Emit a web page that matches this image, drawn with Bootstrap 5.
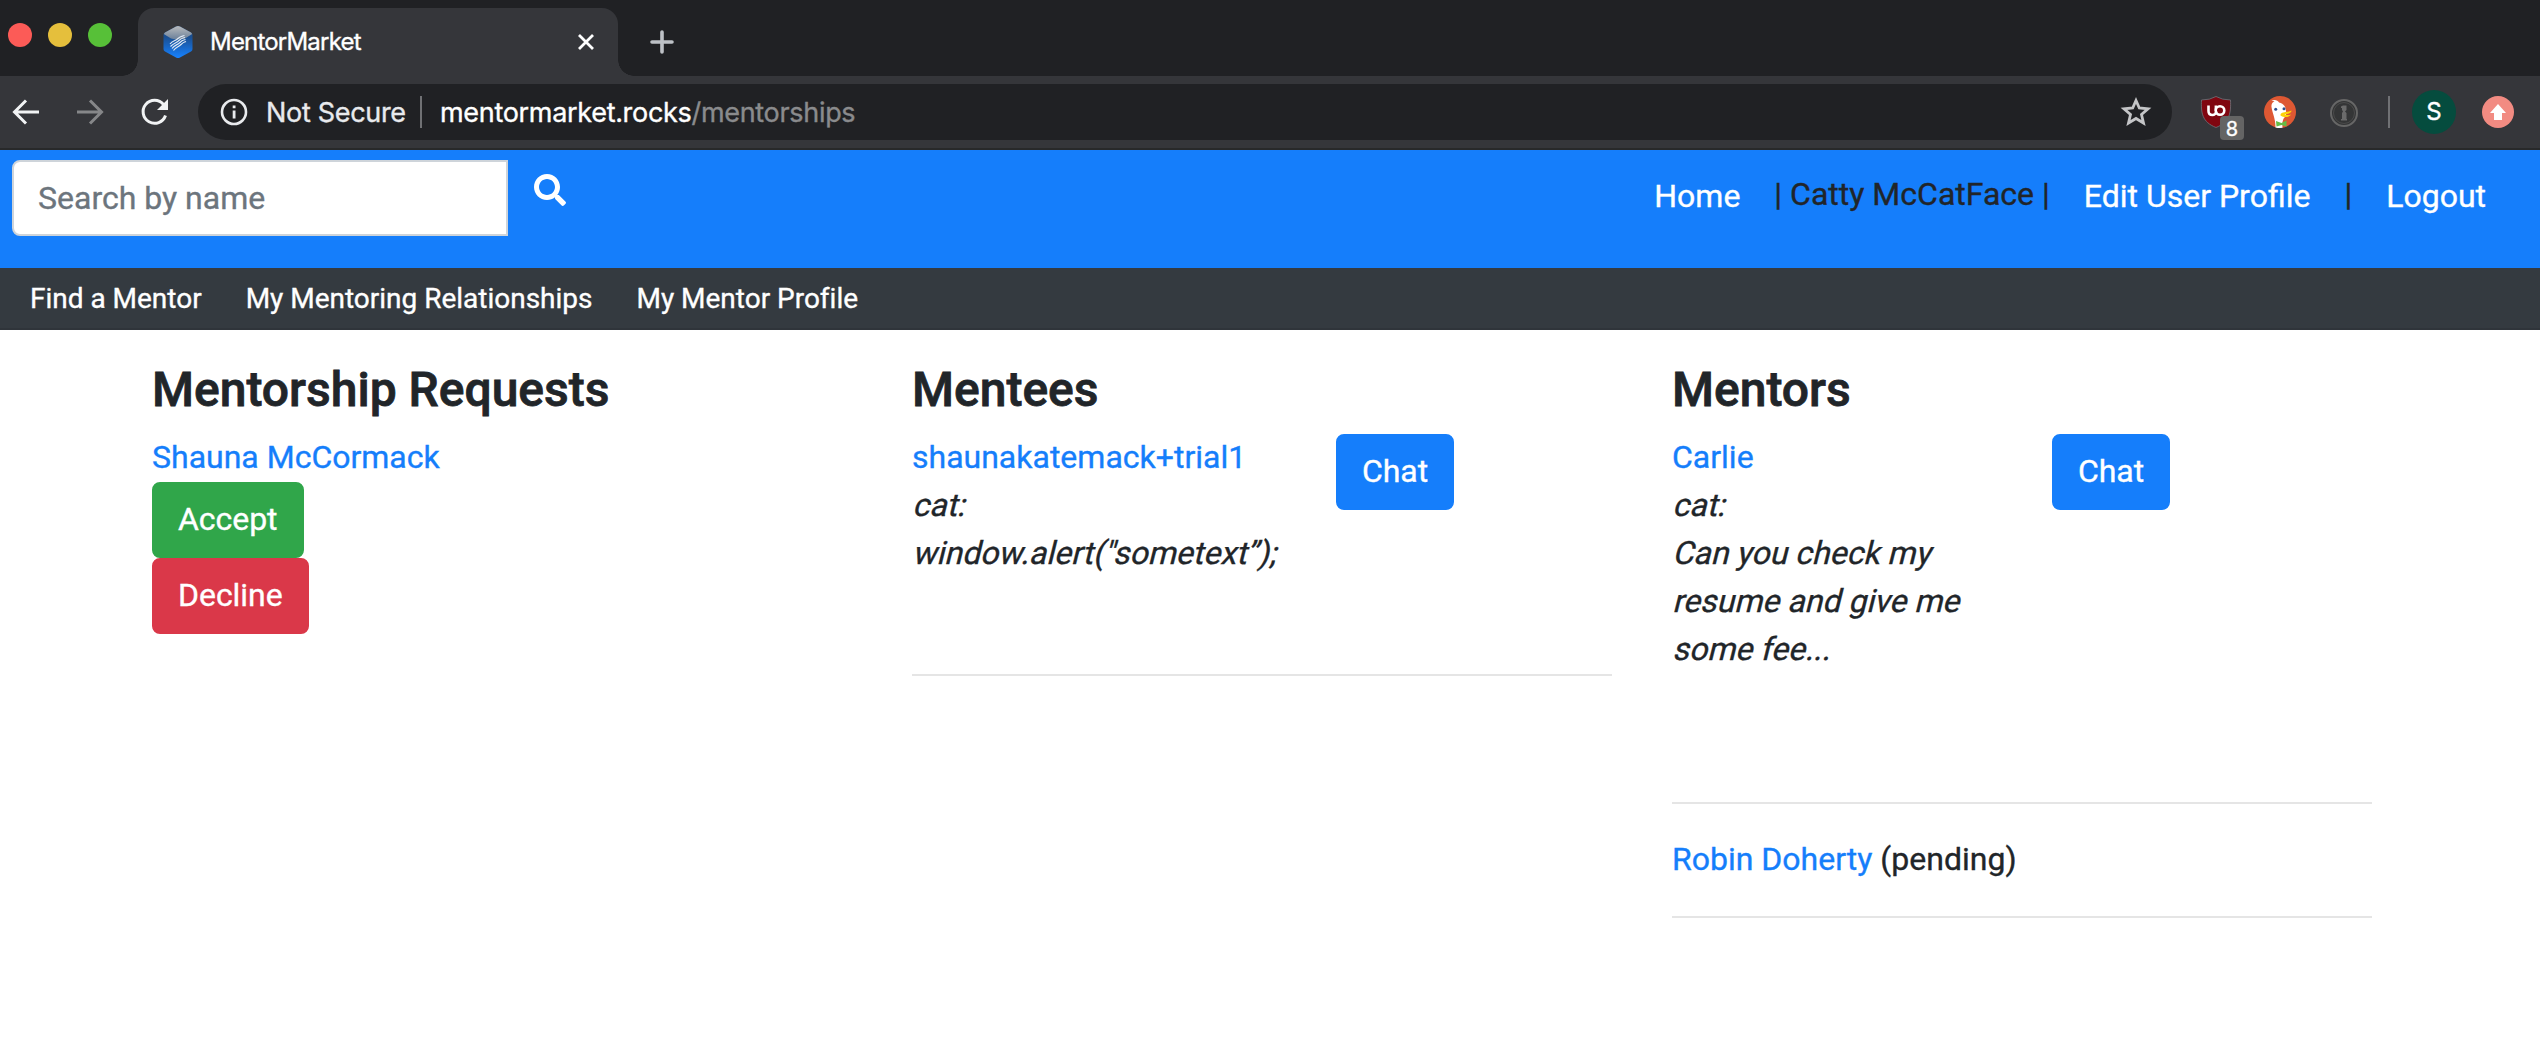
<!DOCTYPE html>
<html lang="en">
<head>
<meta charset="utf-8">
<title>MentorMarket</title>
<link href="https://cdn.jsdelivr.net/npm/bootstrap@5.3.0/dist/css/bootstrap.min.css" rel="stylesheet">
<style>
:root{font-size:32px}
body{font-family:Roboto,sans-serif;font-size:32px;line-height:1.5;color:#212529;background:#fff;overflow:hidden;-webkit-text-stroke:.35px}
a{color:#157efb;text-decoration:none}
svg{display:block;flex:none}
.chrome-ui{font-family:Inter,sans-serif;line-height:1}
.tabstrip{height:76px;background:#202124}
.lights{width:122px;height:70px;padding-left:8px;gap:16px}
.light{width:24px;height:24px;border-radius:50%}
.light-close{background:#fc5b57}
.light-min{background:#e5bf3c}
.light-max{background:#57c038}
.tab-foot{width:16px;height:16px}
.foot-l{background:radial-gradient(circle at 0 0,#202124 15.5px,#35363a 16px)}
.foot-r{background:radial-gradient(circle at 100% 0,#202124 15.5px,#35363a 16px)}
.active-tab{width:480px;height:68px;border-radius:16px 16px 0 0;background:#35363a;padding:0 24px 0 25px;color:#fff;font-size:24px}
.tab-title{margin-left:17px;letter-spacing:-.8px}
.new-tab{margin:30px 0 0 16px}
.toolbar{height:74px;background:#35363a;border-bottom:2px solid #28292a;padding-left:10px}
.nav-icons{gap:32px}
.omnibox{flex:none;width:1974px;height:56px;border-radius:28px;background:#202124;margin-left:28px;padding:0 20px 0 22px;font-size:27px;letter-spacing:-.31px;color:#e8eaed}
.not-secure{margin-left:18px;width:154px}
.address{margin-left:18px}
.addr-path{color:#8a8b8d}
.tool-sep{width:2px;height:32px;background:#707174}
.ext-sep{margin-left:30px}
.ubo{width:46px;height:44px;margin:12px 0 0 27px}
.ubo-count{left:21px;top:20px;width:24px;height:24px;border-radius:4px;background:#646464;color:#fff;font-size:20px;line-height:26px}
.duck{margin-left:19px}
.keyhole{margin:2px 0 0 34px}
.avatar{width:44px;height:44px;border-radius:50%;background:#054c3e;color:#fff;font-size:24px;margin-left:22px}
.update-dot{margin-left:26px}
.topbar{height:118px;background:#157efb;padding:10px 54px 0 12px}
.search-box{width:496px;height:76px;border:2px solid #ced4da;border-radius:8px 0 0 8px;padding:12px 24px;font-size:32px}
.search-box::placeholder{color:#6c757d;opacity:1}
.search-icon{margin:14px 0 0 26px}
.top-links{line-height:48px;padding-top:10px}
.top-links a{color:#fff;padding-top:2px}
.mx-name{margin:0 34px}
.mx-bar{margin:0 34px}
.subbar{height:62px;background:#343a40;border-bottom:2px solid #2f343a;padding:1px 0 0 30px;gap:44px;font-size:28px;letter-spacing:-.01px}
.subbar a{color:#fff}
.board{width:2280px;margin-left:122px;padding-top:31px}
.board .col-4{padding:0 30px}
.board h4{font-size:48px;font-weight:500;line-height:58px;margin:0 0 14px;-webkit-text-stroke:.8px}
.board .btn{margin-top:1px;padding:11px 24px 13px}
.board .btn + .btn{margin-top:0}
.btn{--bs-btn-font-size:32px;--bs-btn-border-width:2px;--bs-btn-border-radius:8px;height:76px;line-height:48px;color:#fff;letter-spacing:-.04px}
.btn-primary{--bs-btn-bg:#157efb;--bs-btn-border-color:#157efb}
.btn-success{--bs-btn-bg:#30a64a;--bs-btn-border-color:#30a64a}
.btn-danger{--bs-btn-bg:#da3849;--bs-btn-border-color:#da3849}
.rule{height:2px;background:#e5e5e5}
.mentee-row{height:241px}
.mentor-row{height:369px}
.mentor-text{width:380px}
.mentee-text{width:424px}
.pending-row{height:112px;padding-top:31px}
/* Obliqued regular face, slanted line by line round its baseline */
.slant{display:block;transform:skewX(-14deg);transform-origin:0 75%;white-space:nowrap}
</style>
</head>
<body>
<header class="chrome-ui">
  <div class="tabstrip d-flex align-items-end">
    <div class="lights d-flex align-items-center align-self-start">
      <span class="light light-close"></span><span class="light light-min"></span><span class="light light-max"></span>
    </div>
    <span class="tab-foot foot-l"></span>
    <div class="active-tab d-flex align-items-center">
      <svg width="30" height="32" viewBox="0 0 30 32"><defs><linearGradient id="fav" x1="0" y1="0" x2="0" y2="1"><stop offset="0" stop-color="#174f91"/><stop offset=".35" stop-color="#1a4f92"/><stop offset="1" stop-color="#1682ff"/></linearGradient><linearGradient id="favtop" x1="0" y1="0" x2="0" y2="1"><stop offset="0" stop-color="#b9bbbd"/><stop offset="1" stop-color="#6a7f99"/></linearGradient></defs><path d="M13 .6Q15-.5 17 .6L28 6.500Q29.500 7.500 29.500 9V23Q29.500 24.500 28 25.500L17 31.400Q15 32.500 13 31.400L2 25.500Q.5 24.500.5 23V9Q.5 7.500 2 6.500Z" fill="url(#fav)"/><path d="M13 .6Q15-.5 17 .6L28 6.500 29.200 8 22 12.500Q15 14.500 8 12.500L.8 8 2 6.500Z" fill="url(#favtop)"/><g fill="none" stroke="#e2ebf5" stroke-width="1.200"><path d="M7 18C10 14 12 15.500 15 12.500S19 10.500 21.500 9.500M7.500 20.500C11 16.500 13 17.500 16 14.500S19.500 12.500 22 11.500M9 22.500C12 18.500 14 19.500 17 16.500S20 14.500 22.500 13.500M10.500 24.500C13 21 15 21.500 18 18.500S21 16.500 23 15.500"/></g></svg>
      <span class="tab-title">MentorMarket</span>
      <svg class="ms-auto" width="16" height="16" viewBox="0 0 16 16"><path d="m1 1 14 14M15 1 1 15" stroke="#fff" stroke-width="2.800"/></svg>
    </div>
    <span class="tab-foot foot-r"></span>
    <svg class="new-tab align-self-start" width="24" height="24" viewBox="0 0 24 24"><path d="M12 2v20M2 12h20" stroke="#bdc1c6" stroke-width="3.600" stroke-linecap="round"/></svg>
  </div>
  <div class="toolbar d-flex align-items-center">
    <div class="nav-icons d-flex">
      <svg width="32" height="32" viewBox="0 0 32 32" fill="none" stroke="#f1f3f4" stroke-width="3"><path d="M29 16H5M16 4.500 4.500 16 16 27.500"/></svg>
      <svg width="32" height="32" viewBox="0 0 32 32" fill="none" stroke="#868789" stroke-width="3"><path d="M3 16h24M16 4.500 27.500 16 16 27.500"/></svg>
      <svg width="32" height="32" viewBox="-1 0 32 32"><path d="M24.500 8.500A11.500 11.500 0 1 0 26.500 19.500" fill="none" stroke="#f1f3f4" stroke-width="3"/><path d="M29 3v11H18Z" fill="#f1f3f4"/></svg>
    </div>
    <div class="omnibox d-flex align-items-center">
      <svg width="28" height="28" viewBox="0 0 28 28"><circle cx="14" cy="14" r="12" fill="none" stroke="#e8eaed" stroke-width="2.600"/><path d="M12.700 12.500h2.800v8h-2.800zM12.700 7.500h2.800v2.800h-2.800z" fill="#e8eaed"/></svg>
      <span class="not-secure">Not Secure</span>
      <span class="tool-sep"></span>
      <span class="address"><span class="text-white">mentormarket.rocks</span><span class="addr-path">/mentorships</span></span>
      <svg class="ms-auto" width="32" height="32" viewBox="0 0 32 32"><path d="M16 4.500 19.300 12 28 12.800 21.500 18.500 23.500 27 16 22.500 8.500 27 10.500 18.500 4 12.800 12.700 12Z" fill="none" stroke="#c4c5c7" stroke-width="2.800"/></svg>
    </div>
    <div class="ubo position-relative">
      <svg width="34" height="32" viewBox="0 0 34 32"><path d="M17 .5Q23 4 31.500 4C32 17 31 26 17 31.500 3 26 2 17 2.500 4Q11 4 17 .5Z" fill="#800610" stroke="#70747a" stroke-width=".8"/><path d="M9.500 9.500v5.500q0 4 4 4 3 0 4-3.500" fill="none" stroke="#fff" stroke-width="2.600"/><path d="M16.800 9.500v5" stroke="#fff" stroke-width="2.400"/><circle cx="21" cy="14.500" r="4.300" fill="none" stroke="#fff" stroke-width="2.600"/></svg>
      <span class="ubo-count position-absolute text-center">8</span>
    </div>
    <svg class="duck" width="32" height="32" viewBox="0 0 32 32"><circle cx="16" cy="16" r="16" fill="#de5833"/><path d="M11.500 31.400C11.500 22 8.500 18 7.500 11 7 7.500 9 6 10.500 5.500L7.500 4.500C11 3 14 4.500 15 6.500 20 7.500 22 11 22 16V20C20 22 18 23 18.500 31.800Q15 32.200 11.500 31.400Z" fill="#fff"/><path d="M16.500 18.500C17.500 16 23 16.500 27.500 14.500 27.500 17 24 18 20.500 18.500 23 19.500 25 19 27 18.500 25.500 21.500 20 22 16.500 19.500Z" fill="#fdd209"/><path d="m12 25 5.500 2 5-2.500v6l-5-1.500-5 1.500Z" fill="#65bc46"/><circle cx="11.700" cy="13.300" r="1.500" fill="#2d4f8e"/><circle cx="20" cy="12.800" r="1.500" fill="#2d4f8e"/></svg>
    <svg class="keyhole" width="28" height="28" viewBox="0 0 28 28"><circle cx="14" cy="14" r="13" fill="#343536" stroke="#666" stroke-width="2"/><circle cx="14" cy="14" r="10.500" fill="none" stroke="#4b4b4b" stroke-width="1"/><path d="M11 7.500 13 6.500H16.500V11L15 12.500 16.500 14V20H17V21.500H11V20H12V14L13 12.500 12 11V9H11Z" fill="#6b6b6b"/></svg>
    <span class="tool-sep ext-sep"></span>
    <span class="avatar d-flex align-items-center justify-content-center">S</span>
    <svg class="update-dot" width="32" height="32" viewBox="0 0 32 32"><circle cx="16" cy="16" r="16" fill="#f28b82"/><path d="M16 8 24 17H20V24H12V17H8Z" fill="#fff"/></svg>
  </div>
</header>

<nav class="topbar d-flex align-items-start">
  <input class="search-box bg-white" type="text" placeholder="Search by name">
  <svg class="search-icon" width="32" height="32" viewBox="0 0 512 512" fill="#fff"><path d="M505 442.700 405.300 343c-4.500-4.500-10.600-7-17-7H372c27.600-35.300 44-79.700 44-128C416 93.100 322.900 0 208 0S0 93.100 0 208s93.100 208 208 208c48.300 0 92.700-16.400 128-44v16.300c0 6.400 2.500 12.500 7 17l99.700 99.700c9.400 9.400 24.600 9.400 33.900 0l28.300-28.300c9.400-9.400 9.400-24.600.1-34zM208 336c-70.700 0-128-57.200-128-128 0-70.700 57.200-128 128-128 70.700 0 128 57.200 128 128 0 70.700-57.200 128-128 128z"/></svg>
  <div class="top-links d-flex ms-auto">
    <a href="#">Home</a>
    <span class="mx-name">| Catty McCatFace |</span>
    <a href="#">Edit User Profile</a>
    <span class="mx-bar">|</span>
    <a href="#">Logout</a>
  </div>
</nav>
<nav class="subbar d-flex align-items-center">
  <a href="#">Find a Mentor</a><a href="#">My Mentoring Relationships</a><a href="#">My Mentor Profile</a>
</nav>

<main class="board">
  <div class="row g-0">
    <section class="col-4">
      <h4>Mentorship Requests</h4>
      <a href="#">Shauna McCormack</a>
      <div class="d-flex flex-column align-items-start">
        <button class="btn btn-success">Accept</button>
        <button class="btn btn-danger">Decline</button>
      </div>
    </section>
    <section class="col-4">
      <h4>Mentees</h4>
      <div class="mentee-row d-flex align-items-start">
        <div class="mentee-text"><a href="#">shaunakatemack+trial1</a><span class="slant">cat:</span><span class="slant">window.alert("sometext”);</span></div>
        <button class="btn btn-primary">Chat</button>
      </div>
      <div class="rule"></div>
    </section>
    <section class="col-4">
      <h4>Mentors</h4>
      <div class="mentor-row d-flex align-items-start">
        <div class="mentor-text"><a href="#">Carlie</a><span class="slant">cat:</span><span class="slant">Can you check my</span><span class="slant">resume and give me</span><span class="slant">some fee...</span></div>
        <button class="btn btn-primary">Chat</button>
      </div>
      <div class="rule"></div>
      <div class="pending-row"><a href="#">Robin Doherty</a> (pending)</div>
      <div class="rule"></div>
    </section>
  </div>
</main>
<script src="https://cdn.jsdelivr.net/npm/bootstrap@5.3.0/dist/js/bootstrap.bundle.min.js"></script>
</body>
</html>
